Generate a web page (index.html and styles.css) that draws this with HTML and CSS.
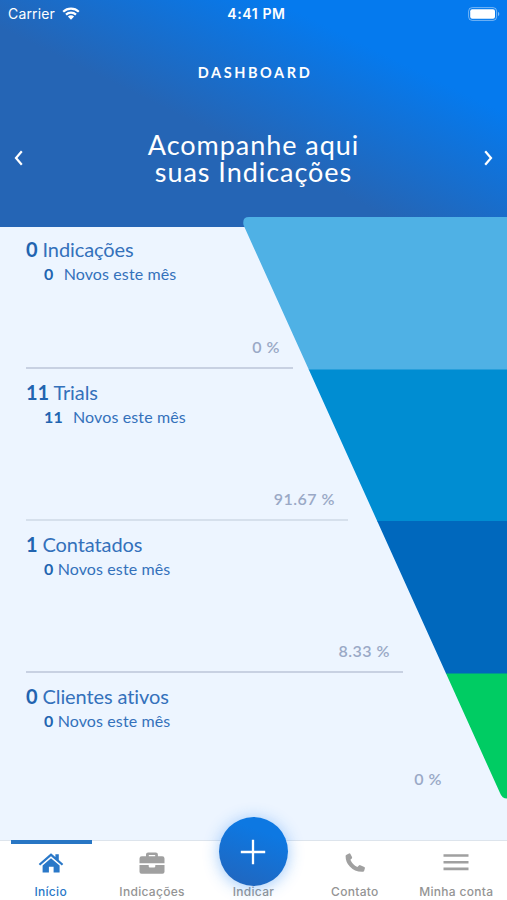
FILE: index.html
```
<!DOCTYPE html>
<html lang="pt-BR">
<head>
  <meta charset="UTF-8">
  <title>Dashboard</title>
  <meta name="viewport" content="width=device-width, initial-scale=1.0">
  <link rel="stylesheet" href="styles.css">
</head>
<body>
  <header class="header">
    <div class="statusbar">
      <div class="carrier">
        <span>Carrier</span>
        <svg class="wifi" viewBox="0 0 18 13" width="18" height="13">
          <path d="M1.2 4.7a11.2 11.2 0 0 1 15.6 0M4 7.6a7.2 7.2 0 0 1 10 0" fill="none" stroke="#fff" stroke-width="2.2"/>
          <path d="M5.9 9.6a4.5 4.5 0 0 1 6.2 0L9 12.8z" fill="#fff"/>
        </svg>
      </div>
      <div class="time">4:41 PM</div>
      <svg class="battery" viewBox="0 0 32 14" width="32" height="14">
        <rect x=".6" y=".6" width="28" height="12.8" rx="3.6" fill="none" stroke="#fff" stroke-opacity=".45"/>
        <rect x="2.2" y="2.3" width="24.8" height="9.4" rx="2" fill="#fff"/>
        <path d="M30 5c1.7.4 1.7 3.6 0 4z" fill="#fff" fill-opacity=".5"/>
      </svg>
    </div>
    <div class="page-name">DASHBOARD</div>
    <div class="hero">
      <svg class="arrow" viewBox="0 0 10 16" width="10" height="16"><path d="M7.8 1.3 2 8l5.8 6.700"/></svg>
      <h1>Acompanhe aqui<br>suas Indicações</h1>
      <svg class="arrow" viewBox="0 0 10 16" width="10" height="16"><path d="M2.2 1.3 8 8l-5.800 6.700"/></svg>
    </div>
  </header>

  <main class="stages">
    <section class="stage stage-1">
      <h2><b>0</b> Indicações</h2>
      <p class="news wide"><b>0</b> <span>Novos este mês</span></p>
      <p class="percent">0 %</p>
    </section>
    <section class="stage stage-2">
      <h2><b>11</b> Trials</h2>
      <p class="news wide"><b>11</b> <span>Novos este mês</span></p>
      <p class="percent">91.67 %</p>
    </section>
    <section class="stage stage-3">
      <h2><b>1</b> Contatados</h2>
      <p class="news"><b>0</b> <span>Novos este mês</span></p>
      <p class="percent">8.33 %</p>
    </section>
    <section class="stage stage-4">
      <h2><b>0</b> Clientes ativos</h2>
      <p class="news"><b>0</b> <span>Novos este mês</span></p>
      <p class="percent">0 %</p>
    </section>

    <!-- funnel, hangs over the header edge -->
    <svg class="funnel" viewBox="0 0 264 583" width="264" height="583">
      <clipPath id="shape">
        <path d="M264 0H6Q-1 0 .5 8L257 576Q259 581.5 264 581.5z"/>
      </clipPath>
      <g clip-path="url(#shape)">
        <rect width="264" height="153" fill="#4fb1e5"/>
        <rect y="152.5" width="264" height="152" fill="#008dd2"/>
        <rect y="304" width="264" height="153" fill="#0068bd"/>
        <rect y="456.5" width="264" height="127" fill="#00cc63"/>
      </g>
    </svg>
  </main>

  <nav class="tabbar">
    <a class="tab active">
      <svg viewBox="0 0 26 22" width="26" height="22">
        <path d="M13 1.2 17.4 5V2.2h3.400V8l4.500 3.900-1.500 1.700L13 4.300 2.200 13.600.7 11.900z"/>
        <path d="M13 6.200 21.600 13.600V20.600h-6v-5.800h-4.700v5.800H4.600v-7z"/>
      </svg>
      <span>Início</span>
    </a>
    <a class="tab">
      <svg viewBox="0 0 26 22" width="26" height="22">
        <path fill-rule="evenodd" d="M7 4.200V2.500Q7 .4 9.100.4h7.700Q18.900.4 18.900 2.500v1.700h4.300q2.300 0 2.300 2.300v4.700H.5V6.500q0-2.300 2.300-2.300zm2.800 0h6.400V2.900H9.800z"/>
        <path d="M.5 13h9.200v1.300q0 1.200 1.200 1.200h4.200q1.200 0 1.200-1.200V13h9.200v6.700q0 2-2 2H2.500q-2 0-2-2z"/>
      </svg>
      <span>Indicações</span>
    </a>
    <a class="tab center">
      <div class="add">
        <svg viewBox="0 0 26 26" width="26" height="26"><path d="M13 .8v24.400M.8 13h24.400" stroke="#fff" stroke-width="2.3"/></svg>
      </div>
      <span>Indicar</span>
    </a>
    <a class="tab">
      <svg viewBox="0 0 22 22" width="22" height="22">
        <path d="M2.600 2.700 5 1.400q.8-.4 1.300.4l1.700 3.300q.4.800-.2 1.400L6.400 7.700q2 5 7 7.300l1.500-1.600q.6-.6 1.400-.2l4 1.800q.8.400.6 1.200l-.7 2.600q-.3.900-1.200 1-8.200.4-13.200-5.200Q1.500 10 1.600 4q0-.9 1-1.300z"/>
      </svg>
      <span>Contato</span>
    </a>
    <a class="tab">
      <svg viewBox="0 0 26 22" width="26" height="22">
        <path d="M.5 2.200h25v2.600H.5zM.5 8.900h25v2.600H.5zM.5 15.600h25v2.600H.5z"/>
      </svg>
      <span>Minha conta</span>
    </a>
  </nav>
</body>
</html>
```
FILE: styles.css
```
* {
  box-sizing: border-box;
}
html, body {
  margin: 0;
  padding: 0;
}
body {
  height: 900px;
  display: flex;
  flex-direction: column;
  overflow: hidden;
  background: #edf5ff;
  color: #3471bb;
  font-family: Lato, "Open Sans", sans-serif;
  font-variant-ligatures: none;
}
h1, h2, p {
  margin: 0;
  font-weight: 400;
}

/* header */
.header {
  flex: none;
  height: 227px;
  color: #fff;
  background: linear-gradient(26deg, #2565b5 42%, #057aee 76%);
}
.statusbar {
  height: 27px;
  padding: 0 7px 0 8px;
  display: grid;
  grid-template-columns: 1fr auto 1fr;
  align-items: center;
  font-family: Inter, Roboto, sans-serif;
  font-size: 14px;
}
.carrier {
  display: flex;
  align-items: center;
  gap: 7px;
  letter-spacing: .15px;
}
.time {
  font-weight: 600;
  padding-left: 5px;
  letter-spacing: .6px;
}
.battery {
  justify-self: end;
}
.page-name {
  margin-top: 36px;
  padding-left: 3px;
  text-align: center;
  font-size: 14.5px;
  line-height: 20px;
  font-weight: 700;
  letter-spacing: 2.6px;
}
.hero {
  margin-top: 48px;
  padding: 0 14px;
  display: flex;
  justify-content: space-between;
  align-items: center;
}
.hero h1 {
  font-size: 27px;
  line-height: 27px;
  text-align: center;
  letter-spacing: .95px;
}
.arrow path {
  fill: none;
  stroke: #fff;
  stroke-width: 2.2;
}

/* funnel stages */
.stages {
  flex: 1;
  position: relative;
  display: flex;
  flex-direction: column;
}
.stage {
  height: 152px;
  margin-left: 26px;
  padding-top: 10px;
  display: flex;
  flex-direction: column;
  border-bottom: 2px solid #c8d1e2;
}
.stage-1 {
  width: 267px;
  height: 142px;
  padding-top: 9px;
}
.stage-2 {
  width: 322px;
  border-bottom-color: #d6e0ec;
}
.stage-3 {
  width: 377px;
}
.stage-4 {
  width: 429px;
  height: 128px;
  border-bottom: 0;
}
.stage h2 {
  font-size: 20px;
  line-height: 26px;
  letter-spacing: -.1px;
}
.stage b {
  font-weight: 700;
  color: #2264b0;
}
.news {
  padding-left: 18px;
  font-size: 16px;
  line-height: 23px;
  letter-spacing: .12px;
}
.wide span {
  margin-left: 6px;
}
.percent {
  margin-top: auto;
  padding: 0 13px 9px 0;
  text-align: right;
  font-size: 16px;
  line-height: 22px;
  font-weight: 600;
  letter-spacing: .5px;
  color: #9aa9c6;
}
.stage-4 .percent {
  padding-bottom: 11px;
}
.funnel {
  position: absolute;
  top: -10px;
  right: 0;
}

/* bottom tabs */
.tabbar {
  flex: none;
  height: 60px;
  display: grid;
  grid-template-columns: repeat(5, 1fr);
  background: #fff;
  border-top: 1px solid #dde4ec;
}
.tab {
  position: relative;
  padding-top: 12px;
  display: flex;
  flex-direction: column;
  align-items: center;
  color: #949494;
  font-family: Inter, Roboto, sans-serif;
  font-size: 12px;
  font-weight: 500;
  letter-spacing: .3px;
  white-space: nowrap;
}
.tab > svg {
  margin-top: -1px;
  fill: #a0a0a0;
}
.tab span {
  margin-top: 10px;
  line-height: 16px;
}
.active {
  color: #2a78c8;
}
.active > svg {
  fill: #2a78c8;
}
.active::before {
  content: "";
  position: absolute;
  top: -1px;
  left: 11px;
  width: 81px;
  height: 4px;
  background: #2876c4;
}
.center {
  justify-content: flex-end;
}
.add {
  position: absolute;
  top: -24px;
  left: 50%;
  width: 69px;
  height: 69px;
  margin-left: -34.5px;
  border-radius: 50%;
  display: flex;
  align-items: center;
  justify-content: center;
  background: linear-gradient(20deg, #2067c0 10%, #0d78e2 75%);
  box-shadow: 0 2px 16px rgba(40, 135, 245, .45);
}
```
